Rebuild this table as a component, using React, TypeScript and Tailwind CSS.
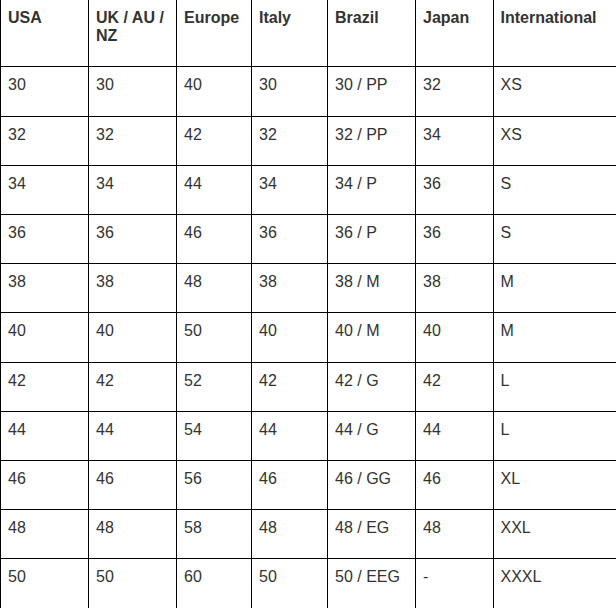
const rows: string[][] = [
  ['30', '30', '40', '30', '30 / PP', '32', 'XS'],
  ['32', '32', '42', '32', '32 / PP', '34', 'XS'],
  ['34', '34', '44', '34', '34 / P', '36', 'S'],
  ['36', '36', '46', '36', '36 / P', '36', 'S'],
  ['38', '38', '48', '38', '38 / M', '38', 'M'],
  ['40', '40', '50', '40', '40 / M', '40', 'M'],
  ['42', '42', '52', '42', '42 / G', '42', 'L'],
  ['44', '44', '54', '44', '44 / G', '44', 'L'],
  ['46', '46', '56', '46', '46 / GG', '46', 'XL'],
  ['48', '48', '58', '48', '48 / EG', '48', 'XXL'],
  ['50', '50', '60', '50', '50 / EEG', '-', 'XXXL'],
];

const headers = ['USA', 'UK / AU / NZ', 'Europe', 'Italy', 'Brazil', 'Japan', 'International'];

export default function App() {
  return (
    <div className="w-[616px] h-[608px] overflow-hidden bg-white font-['Liberation_Sans',Arial,sans-serif] text-[16px] leading-[18.2px] text-[#333]">
      <div className="grid w-[660px] grid-cols-[88px_88px_75px_76px_88px_77.5px_167.5px]">
        {headers.map((h) => (
          <div key={h} className="border-l border-b border-black pl-[7px] pr-[6px] pt-[9px] pb-[21px] font-bold">
            {h}
          </div>
        ))}
        {rows.map((row, i) =>
          row.map((cell, j) => (
            <div key={`${i}-${j}`} className="border-l border-b border-black pl-[7px] pr-[6px] pt-[9px] pb-[21px]">
              {cell}
            </div>
          ))
        )}
      </div>
    </div>
  );
}
